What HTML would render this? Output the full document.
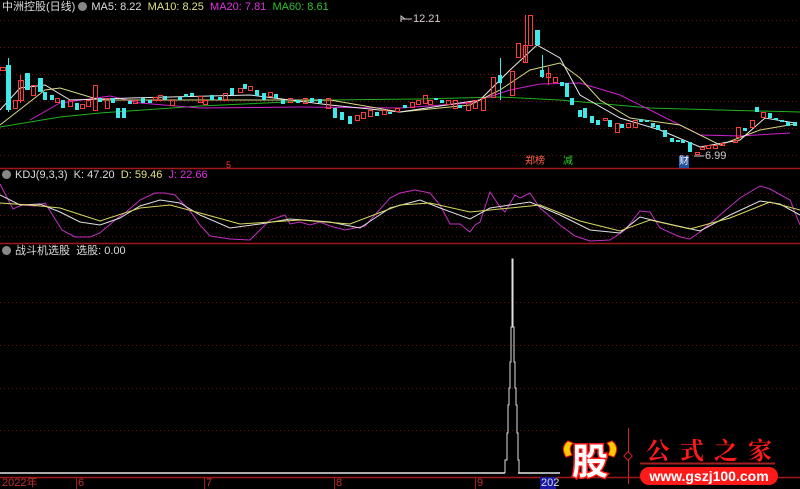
<!DOCTYPE html><html><head><meta charset="utf-8"><style>
body{margin:0;background:#000;width:800px;height:489px;overflow:hidden;position:relative;font-family:"Liberation Sans","Noto Sans CJK SC",sans-serif}
.t{position:absolute;font-size:11px;white-space:nowrap;line-height:12px}
.ic{display:inline-block;width:9px;height:9px;border-radius:50%;background:#888;vertical-align:-1px;margin-right:4px}
</style></head><body>
<svg width="800" height="489" style="position:absolute;left:0;top:0">
<g stroke="#7a1010" stroke-dasharray="1,3" stroke-width="1">
<line x1="0" x2="800" y1="20.5" y2="20.5"/><line x1="0" x2="800" y1="47.5" y2="47.5"/><line x1="0" x2="800" y1="74.5" y2="74.5"/><line x1="0" x2="800" y1="101.5" y2="101.5"/><line x1="0" x2="800" y1="128.5" y2="128.5"/><line x1="0" x2="800" y1="155.5" y2="155.5"/>
<line x1="0" x2="800" y1="193.5" y2="193.5"/><line x1="0" x2="800" y1="204.5" y2="204.5"/><line x1="0" x2="800" y1="215.5" y2="215.5"/><line x1="0" x2="800" y1="227.5" y2="227.5"/><line x1="0" x2="800" y1="236.5" y2="236.5"/>
<line x1="0" x2="800" y1="302.5" y2="302.5"/><line x1="0" x2="800" y1="345.5" y2="345.5"/><line x1="0" x2="800" y1="388.5" y2="388.5"/><line x1="0" x2="560" y1="430.5" y2="430.5"/>
</g>
<line x1="0" x2="800" y1="168.5" y2="168.5" stroke="#a01818" stroke-width="1.5"/>
<line x1="0" x2="800" y1="243.5" y2="243.5" stroke="#a01818" stroke-width="1.5"/>
<line x1="0" x2="800" y1="477.5" y2="477.5" stroke="#a01818" stroke-width="1.5"/>
<g fill="none" stroke-width="1">
<polyline stroke="#1fb21f" points="0,127 60,117 100,113 200,106 330,100 420,99 500,97 560,100 650,108 720,110 800,112"/>
<polyline stroke="#d020d0" points="30,120 60,103 110,96 140,103 200,108 300,107 400,108 470,103 510,90 540,84 580,83 620,95 650,110 700,135 740,136 790,133"/>
<polyline stroke="#d8d880" points="0,125 45,90 60,88 100,100 160,100 250,100 330,100 400,112 470,105 500,90 530,70 560,63 580,78 600,100 630,118 680,125 720,145 760,130 795,124"/>
<polyline stroke="#e8e8e8" points="0,110 20,88 45,85 70,100 130,98 250,95 330,105 400,112 480,100 510,70 537,45 560,58 580,95 620,118 660,130 700,147 740,140 765,118 795,123"/>
</g>
<g id="c" stroke-width="1">
<g stroke="#ff3c3c" fill="none">
<rect x="0.5" y="67.5" width="5" height="3"/><rect x="13.5" y="100.5" width="4" height="8"/><rect x="18.5" y="80.5" width="5" height="20"/><rect x="31.5" y="85.5" width="4" height="10"/><rect x="55.5" y="98.5" width="4" height="4"/><rect x="68.5" y="100.5" width="4" height="6"/><rect x="80.5" y="104.5" width="4" height="4"/><rect x="86.5" y="100.5" width="4" height="6"/><rect x="93.5" y="85.5" width="4" height="25"/><rect x="105.5" y="98.5" width="4" height="10"/><rect x="133.5" y="100.5" width="4" height="3"/><rect x="153.5" y="97.5" width="4" height="3"/><rect x="158.5" y="95.5" width="4" height="5"/><rect x="170.5" y="100.5" width="4" height="5"/><rect x="198.5" y="96.5" width="4" height="6"/><rect x="203.5" y="100.5" width="4" height="4"/><rect x="223.5" y="93.5" width="4" height="7"/><rect x="238.5" y="88.5" width="4" height="4"/><rect x="248.5" y="86.5" width="4" height="4"/><rect x="268.5" y="92.5" width="4" height="4"/><rect x="288.5" y="98.5" width="4" height="4"/><rect x="303.5" y="98.5" width="4" height="5"/><rect x="326.5" y="98.5" width="4" height="10"/><rect x="355.5" y="115.5" width="4" height="5"/><rect x="361.5" y="112.5" width="4" height="6"/><rect x="368.5" y="110.5" width="4" height="6"/><rect x="382.5" y="110.5" width="4" height="4"/><rect x="395.5" y="108.5" width="4" height="3"/><rect x="410.5" y="102.5" width="4" height="5"/><rect x="416.5" y="100.5" width="4" height="4"/><rect x="423.5" y="95.5" width="4" height="8"/><rect x="428.5" y="100.5" width="4" height="4"/><rect x="446.5" y="100.5" width="4" height="4"/><rect x="453.5" y="100.5" width="4" height="8"/><rect x="466.5" y="102.5" width="4" height="8"/><rect x="473.5" y="100.5" width="4" height="8"/><rect x="481.5" y="98.5" width="4" height="12"/><rect x="491.5" y="77.5" width="4" height="20"/><rect x="510.5" y="71.5" width="4" height="24"/><rect x="516.5" y="43.5" width="4" height="14"/><rect x="523.5" y="45.5" width="4" height="17"/><rect x="528.5" y="15.5" width="4" height="30"/><rect x="546.5" y="73.5" width="4" height="4"/><rect x="553.5" y="77.5" width="4" height="5"/><rect x="603.5" y="118.5" width="4" height="2"/><rect x="615.5" y="123.5" width="4" height="9"/><rect x="626.5" y="123.5" width="4" height="4"/><rect x="633.5" y="120.5" width="4" height="7"/><rect x="695.5" y="152.5" width="4" height="2"/><rect x="700.5" y="147.5" width="4" height="2"/><rect x="706.5" y="145.5" width="4" height="3"/><rect x="713.5" y="145.5" width="4" height="3"/><rect x="720.5" y="143.5" width="4" height="2"/><rect x="733.5" y="140.5" width="4" height="2"/><rect x="736.5" y="127.5" width="4" height="10"/><rect x="750.5" y="120.5" width="4" height="7"/><rect x="761.5" y="112.5" width="4" height="5"/>
</g>
<g fill="#40e8e8">
<rect x="6" y="65" width="5" height="45"/><rect x="25" y="73" width="5" height="17"/><rect x="38" y="78" width="5" height="14"/><rect x="43" y="92" width="4" height="8"/><rect x="50" y="95" width="4" height="5"/><rect x="61" y="100" width="4" height="8"/><rect x="75" y="103" width="4" height="7"/><rect x="98" y="98" width="4" height="4"/><rect x="111" y="98" width="4" height="5"/><rect x="116" y="108" width="4" height="10"/><rect x="122" y="108" width="4" height="10"/><rect x="128" y="101" width="4" height="3"/><rect x="141" y="98" width="4" height="5"/><rect x="148" y="100" width="4" height="3"/><rect x="163" y="96" width="4" height="4"/><rect x="178" y="97" width="4" height="3"/><rect x="184" y="94" width="4" height="3"/><rect x="190" y="93" width="4" height="3"/><rect x="210" y="95" width="4" height="5"/><rect x="218" y="97" width="4" height="3"/><rect x="230" y="88" width="4" height="7"/><rect x="243" y="84" width="4" height="5"/><rect x="255" y="90" width="4" height="6"/><rect x="262" y="93" width="4" height="7"/><rect x="274" y="94" width="4" height="4"/><rect x="281" y="100" width="4" height="4"/><rect x="296" y="100" width="4" height="3"/><rect x="310" y="98" width="4" height="4"/><rect x="318" y="99" width="4" height="4"/><rect x="333" y="108" width="4" height="10"/><rect x="340" y="112" width="4" height="8"/><rect x="348" y="116" width="4" height="8"/><rect x="375" y="112" width="4" height="4"/><rect x="388" y="112" width="4" height="2"/><rect x="403" y="105" width="4" height="3"/><rect x="434" y="98" width="4" height="2"/><rect x="440" y="100" width="4" height="3"/><rect x="458" y="105" width="4" height="3"/><rect x="498" y="75" width="4" height="8"/><rect x="535" y="30" width="5" height="15"/><rect x="540" y="70" width="4" height="7"/><rect x="560" y="82" width="4" height="4"/><rect x="565" y="83" width="4" height="14"/><rect x="570" y="98" width="4" height="7"/><rect x="578" y="110" width="4" height="7"/><rect x="583" y="108" width="4" height="10"/><rect x="590" y="116" width="4" height="7"/><rect x="596" y="120" width="4" height="5"/><rect x="608" y="120" width="4" height="7"/><rect x="620" y="124" width="4" height="4"/><rect x="639" y="119" width="4" height="3"/><rect x="645" y="120" width="4" height="2"/><rect x="651" y="123" width="4" height="4"/><rect x="656" y="125" width="4" height="5"/><rect x="663" y="130" width="4" height="7"/><rect x="670" y="138" width="4" height="4"/><rect x="676" y="140" width="4" height="2"/><rect x="681" y="140" width="4" height="3"/><rect x="688" y="142" width="4" height="10"/><rect x="743" y="128" width="4" height="3"/><rect x="755" y="107" width="4" height="5"/><rect x="768" y="113" width="4" height="5"/><rect x="774" y="118" width="4" height="2"/><rect x="780" y="120" width="4" height="2"/><rect x="786" y="122" width="4" height="4"/><rect x="793" y="122" width="4" height="4"/>
</g>
<g stroke="#ff3c3c"><line x1="525.5" y1="15" x2="525.5" y2="62"/><line x1="548.5" y1="67" x2="548.5" y2="85"/><line x1="20.5" y1="75" x2="20.5" y2="103"/></g>
<g stroke="#40e8e8"><line x1="500.5" y1="58" x2="500.5" y2="100"/><line x1="542.5" y1="55" x2="542.5" y2="78"/><line x1="8.5" y1="58" x2="8.5" y2="112"/></g>
</g>
<g fill="none">
<polyline stroke="#c030c0" points="0,184 13,209 22,205 35,206 45,203 62,230 75,237 90,237 100,233 115,220 125,213 140,200 155,193 165,193 175,195 190,211 200,225 210,236 230,239 250,240 270,220 285,215 290,224 300,222 310,225 320,222 330,226 345,230 365,226 390,198 400,193 415,190 430,193 440,205 450,224 460,224 470,232 475,225 480,222 490,192 500,207 505,212 515,195 520,198 530,193 540,208 560,225 575,236 590,241 610,240 625,230 640,211 650,212 660,228 680,237 690,239 700,232 720,215 740,198 760,186 770,189 790,200 800,225"/>
<polyline stroke="#e0e0e0" points="0,195 20,205 40,204 60,212 80,222 100,225 120,218 140,206 160,200 180,203 200,215 230,228 260,224 290,219 330,222 360,228 390,208 420,200 440,208 470,219 490,208 510,205 530,202 560,215 590,230 620,233 640,217 660,222 700,231 730,215 760,201 780,204 800,215"/>
<polyline stroke="#d8d860" points="0,203 30,205 60,208 100,221 140,208 170,205 200,213 240,224 300,220 350,224 400,205 430,203 470,212 500,209 540,205 580,221 620,231 650,220 690,229 730,218 770,202 800,210"/>
</g>
<line x1="0" x2="505" y1="473" y2="473" stroke="#aaa" stroke-width="2"/>
<line x1="518" x2="560" y1="473" y2="473" stroke="#aaa" stroke-width="2"/>
<polyline fill="none" stroke="#e0e0e0" stroke-width="1" points="505,473 505,460 507,460 507,433 508,433 508,405 509,405 509,388 510,388 510,362 511,362 511,327 512,327 512,259 513,259 513,327 514,327 514,362 515,362 515,388 516,388 516,405 517,405 517,433 518,433 518,460 519,460 519,473"/>
<g stroke="#a01818"><line x1="76.5" y1="477" x2="76.5" y2="489"/><line x1="204.5" y1="477" x2="204.5" y2="489"/><line x1="334.5" y1="477" x2="334.5" y2="489"/><line x1="475.5" y1="477" x2="475.5" y2="489"/></g>
<rect x="540" y="477" width="16" height="12" fill="#1818a0"/>
<polyline points="405,19 401,16 401,22" fill="none" stroke="#ccc"/><line x1="401" y1="19" x2="412" y2="19" stroke="#ccc"/>
<line x1="694" y1="156" x2="704" y2="156" stroke="#ccc"/>
<line x1="628.5" y1="428" x2="628.5" y2="484" stroke="#d02020"/>
<rect x="625" y="453" width="6" height="6" transform="rotate(45 628 456)" fill="#000" stroke="#d02020"/>
<line x1="640" x2="775" y1="463.5" y2="463.5" stroke="#a02020" stroke-width="2"/>
<rect x="640" y="467" width="138" height="18" rx="9" fill="#ff1a1a"/>
<path d="M568,441 q-8,6 -2,16 l6,-2 q-4,-7 1,-12z" fill="#ffcc00" stroke="#ff2000"/>
<path d="M612,441 q8,6 2,16 l-6,-2 q4,-7 -1,-12z" fill="#ffcc00" stroke="#ff2000"/>
<text x="590" y="474" text-anchor="middle" font-size="36" font-weight="bold" fill="#fff" stroke="#ff1a1a" stroke-width="3" paint-order="stroke" font-family="Noto Sans CJK SC, sans-serif">股</text>
<text x="646" y="459" font-size="24" font-weight="bold" fill="#ff1a1a" letter-spacing="10" font-family="Noto Serif CJK SC, serif">公式之家</text>
<text x="709" y="481" text-anchor="middle" font-size="14" font-weight="bold" fill="#fff" font-family="Liberation Sans, sans-serif">www.gszj100.com</text>
</svg>
<div class="t" style="left:2px;top:1px;color:#ddd">中洲控股(日线) <span class="ic"></span><span style="color:#ddd">MA5: 8.22</span>&nbsp; <span style="color:#e0e080">MA10: 8.25</span>&nbsp; <span style="color:#e030e0">MA20: 7.81</span>&nbsp; <span style="color:#30c030">MA60: 8.61</span></div>
<div class="t" style="left:2px;top:169px;color:#ddd"><span class="ic"></span>KDJ(9,3,3)&nbsp; K: 47.20&nbsp; <span style="color:#e0e080">D: 59.46</span>&nbsp; <span style="color:#e030e0">J: 22.66</span></div>
<div class="t" style="left:2px;top:245px;color:#ddd"><span class="ic"></span>战斗机选股&nbsp; 选股: 0.00</div>
<div class="t" style="left:413px;top:13px;color:#ccc">12.21</div>
<div class="t" style="left:705px;top:150px;color:#ccc">6.99</div>
<div class="t" style="left:226px;top:159px;color:#ff3030;font-size:9px">5</div>
<div class="t" style="left:525px;top:156px;color:#ff6040;font-size:10px">郑榜</div>
<div class="t" style="left:563px;top:156px;color:#30d030;font-size:10px">减</div>
<div class="t" style="left:679px;top:156px;color:#fff;background:#2050a0;font-size:10px">财</div>
<div class="t" style="left:2px;top:477px;color:#c03030">2022年</div>
<div class="t" style="left:78px;top:477px;color:#c03030">6</div>
<div class="t" style="left:206px;top:477px;color:#c03030">7</div>
<div class="t" style="left:336px;top:477px;color:#c03030">8</div>
<div class="t" style="left:477px;top:477px;color:#c03030">9</div>
<div class="t" style="left:541px;top:477px;color:#ddd">202</div>
</body></html>
